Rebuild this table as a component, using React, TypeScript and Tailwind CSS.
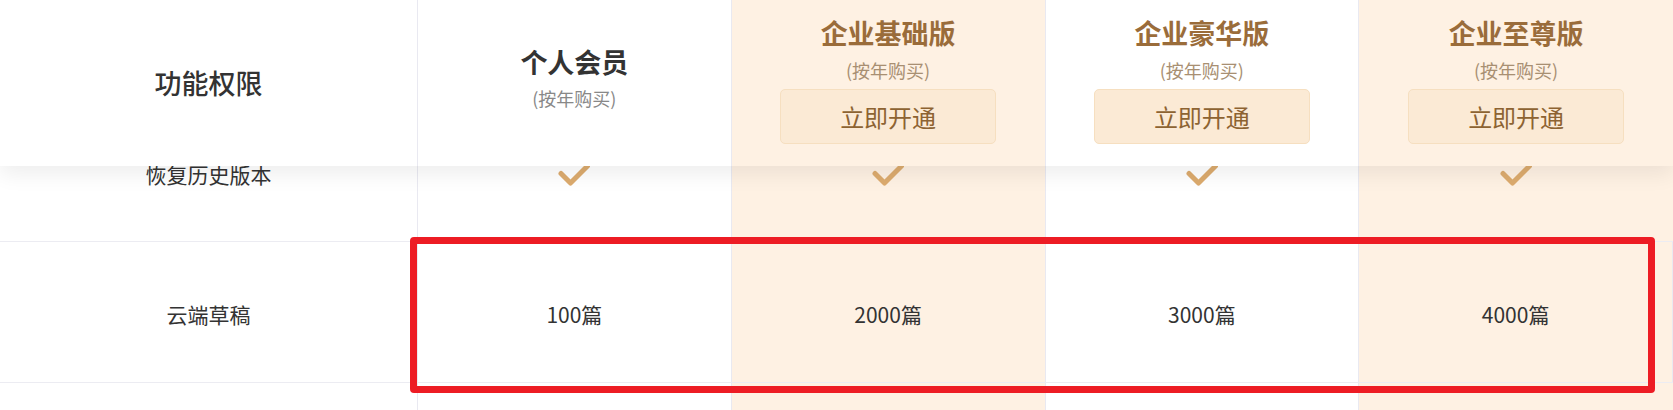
const plans = [
  { name: "个人会员", org: false, drafts: "100篇" },
  { name: "企业基础版", org: true, drafts: "2000篇" },
  { name: "企业豪华版", org: false, drafts: "3000篇" },
  { name: "企业至尊版", org: true, drafts: "4000篇" },
];

function Check() {
  return (
    <svg width="32" height="22" viewBox="0 0 32 22" fill="none">
      <polyline
        points="3,9.5 12.5,19 29.5,2"
        stroke="#dcab6e"
        strokeWidth="5"
        strokeLinecap="round"
        strokeLinejoin="round"
      />
    </svg>
  );
}

function cellBg(org: boolean) {
  return org ? "bg-[#fef1e3]" : "bg-white";
}

export default function App() {
  return (
    <div
      className="h-[410px] w-[1673px] overflow-hidden bg-white text-[#333]"
      style={{ fontFamily: '"Noto Sans CJK SC", "Noto Sans", sans-serif' }}
    >
      {/* Header */}
      <div className="relative z-10 grid h-[166px] grid-cols-[418px_repeat(4,1fr)] bg-white shadow-[0_8px_20px_rgba(0,0,0,0.07)]">
        <div className="flex items-center justify-center border-r border-[#e9e9f1] text-[27px] font-medium">
          功能权限
        </div>
        {plans.map((p, i) => {
          const enterprise = i > 0;
          return (
            <div
              key={p.name}
              className={`flex flex-col items-center border-r border-[#e9e9f1] last:border-r-0 ${cellBg(p.org)} ${
                enterprise ? "pt-[15px]" : "pt-[44px]"
              }`}
            >
              <div
                className={`text-[27px] font-bold leading-[36px] ${
                  enterprise ? "text-[#9a6c3a]" : "text-[#333]"
                }`}
              >
                {p.name}
              </div>
              <div
                className={`text-[18px] leading-[24px] ${
                  enterprise ? "mt-[7px] text-[#a88f72]" : "mt-[6px] text-[#888]"
                }`}
              >
                (按年购买)
              </div>
              {enterprise && (
                <button className="mt-[7px] flex h-[55px] w-[216px] items-center justify-center rounded-[5px] border border-[#f6dfc0] bg-[#fbead5] text-[24px] text-[#8d6332]">
                  立即开通
                </button>
              )}
            </div>
          );
        })}
      </div>

      <div className="-mt-[57px]">
        <div className="grid h-[133px] grid-cols-[418px_repeat(4,1fr)] border-b border-[#ececf2]">
          <div className="flex items-center justify-center border-r border-[#e9e9f1] text-[21px]">
            恢复历史版本
          </div>
          {plans.map((p) => (
            <div
              key={p.name}
              className={`flex items-center justify-center border-r border-[#e9e9f1] last:border-r-0 ${cellBg(p.org)}`}
            >
              <Check />
            </div>
          ))}
        </div>

        <div className="relative grid h-[141px] grid-cols-[418px_repeat(4,1fr)] border-b border-[#ececf2]">
          <div className="flex items-center justify-center border-r border-[#e9e9f1] pt-[5px] text-[21px]">
            云端草稿
          </div>
          {plans.map((p) => (
            <div
              key={p.name}
              className={`flex items-center justify-center border-r border-[#e9e9f1] pt-[5px] text-[21px] last:border-r-0 ${cellBg(p.org)}`}
            >
              {p.drafts}
            </div>
          ))}
          {/* highlight frame */}
          <div className="pointer-events-none absolute left-[410px] top-[-5px] h-[156px] w-[1245px] rounded-[4px] border-[7px] border-[#ed1c24]" />
        </div>

        <div className="grid h-[141px] grid-cols-[418px_repeat(4,1fr)]">
          <div className="border-r border-[#e9e9f1]" />
          {plans.map((p) => (
            <div
              key={p.name}
              className={`border-r border-[#e9e9f1] last:border-r-0 ${cellBg(p.org)}`}
            />
          ))}
        </div>
      </div>
    </div>
  );
}
